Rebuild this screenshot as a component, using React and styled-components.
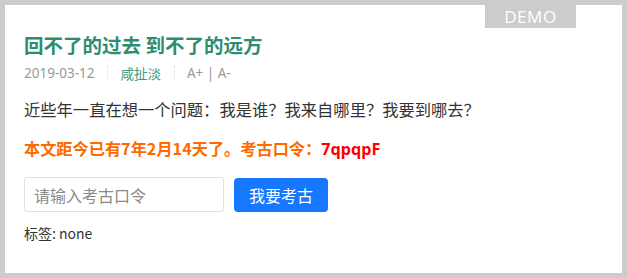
import React, { useState } from 'react';
import styled, { createGlobalStyle } from 'styled-components';

const GlobalStyle = createGlobalStyle`
    html, body {
        margin: 0;
        padding: 0;
        background: #cccccc;
    }
    body {
        font-family: "Noto Sans CJK SC", "Noto Sans", sans-serif;
    }
`;

const Frame = styled.div`
    box-sizing: border-box;
    width: 627px;
    height: 278px;
    padding: 5px;
    background: #cccccc;
`;

const Card = styled.div`
    position: relative;
    box-sizing: border-box;
    height: 100%;
    background: #ffffff;
    padding: 27px 19px;
`;

const Badge = styled.div`
    position: absolute;
    top: 0;
    right: 46px;
    width: 91px;
    height: 23px;
    background: #cccccc;
    color: #ffffff;
    font-family: "Open Sans", "Noto Sans", sans-serif;
    font-size: 17px;
    line-height: 23px;
    text-align: center;
    letter-spacing: 0.6px;
`;

const Title = styled.h1`
    margin: 0;
    font-size: 19.5px;
    line-height: 26px;
    font-weight: 700;
    color: #2e8d6f;
`;

const Meta = styled.div`
    display: flex;
    align-items: center;
    margin-top: 5px;
    height: 20px;
    font-size: 13.5px;
    color: #999999;
    font-family: "Noto Sans", "Noto Sans CJK SC", sans-serif;
`;

const MetaItem = styled.span`
    color: ${p => (p.$accent ? '#3a9a86' : '#999999')};
    font-family: "Noto Sans CJK SC", sans-serif;
    font-size: 13.5px;
`;

const Sep = styled.span`
    width: 0;
    height: 14px;
    border-left: 1px dotted #dddddd;
    margin: 0 12px 0 13px;
`;

const Body = styled.p`
    margin: 14px 0 0;
    font-size: 16.3px;
    line-height: 24px;
    color: #333333;
`;

const Notice = styled.p`
    margin: 15px 0 0;
    font-size: 16.2px;
    line-height: 24px;
    font-weight: 700;
    color: #ff6a00;
`;

const Code = styled.span`
    color: #ff0000;
    font-family: "Noto Sans", "Noto Sans CJK SC", sans-serif;
`;

const FormRow = styled.div`
    display: flex;
    align-items: center;
    gap: 10px;
    margin-top: 16px;
`;

const Input = styled.input`
    box-sizing: border-box;
    width: 200px;
    height: 35px;
    padding: 0 9px;
    border: 1px solid #e0e0e0;
    border-radius: 3px;
    font-family: inherit;
    font-size: 16px;
    color: #333333;
    outline: none;

    &::placeholder {
        color: #8a8a8a;
    }
`;

const Button = styled.button`
    box-sizing: border-box;
    width: 94px;
    height: 34px;
    border: none;
    border-radius: 4px;
    background: #1677ff;
    color: #ffffff;
    font-family: inherit;
    font-size: 16px;
    cursor: pointer;
`;

const Tags = styled.div`
    margin-top: 11px;
    font-size: 14px;
    line-height: 20px;
    color: #333333;
`;

const App = () => {
    const [code, setCode] = useState('');

    return (
        <>
            <GlobalStyle />
            <Frame>
                <Card>
                    <Badge>DEMO</Badge>
                    <Title>回不了的过去 到不了的远方</Title>
                    <Meta>
                        <span>2019-03-12</span>
                        <Sep />
                        <MetaItem $accent>咸扯淡</MetaItem>
                        <Sep />
                        <span>A+ | A-</span>
                    </Meta>
                    <Body>近些年一直在想一个问题：我是谁？我来自哪里？我要到哪去？</Body>
                    <Notice>
                        本文距今已有7年2月14天了。考古口令：<Code>7qpqpF</Code>
                    </Notice>
                    <FormRow>
                        <Input
                            placeholder="请输入考古口令"
                            value={code}
                            onChange={e => setCode(e.target.value)}
                        />
                        <Button>我要考古</Button>
                    </FormRow>
                    <Tags>标签: none</Tags>
                </Card>
            </Frame>
        </>
    );
};

export default App;
